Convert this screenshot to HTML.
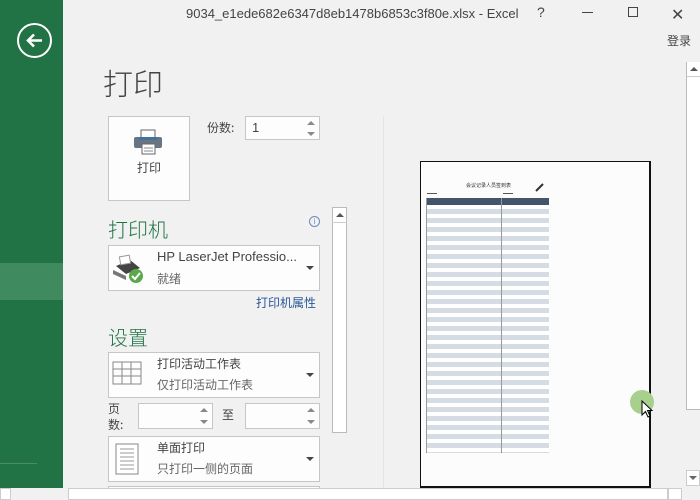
<!DOCTYPE html>
<html><head><meta charset="utf-8"><style>
*{margin:0;padding:0;box-sizing:border-box}
body{width:700px;height:500px;overflow:hidden;background:#f1f1f1;font-family:"Liberation Sans","Noto Sans CJK SC",sans-serif;position:relative;color:#444}
.a{position:absolute}
.box{position:absolute;background:#fdfdfd;border:1px solid #c6c6c6}
.cj{font-family:"Noto Sans CJK SC",sans-serif}
.tri{position:absolute;width:0;height:0;border-left:4px solid transparent;border-right:4px solid transparent;border-top:4px solid #444}
.up{position:absolute;width:0;height:0;border-left:4px solid transparent;border-right:4px solid transparent;border-bottom:4px solid #888}
.dn{position:absolute;width:0;height:0;border-left:4px solid transparent;border-right:4px solid transparent;border-top:4px solid #888}
</style></head><body>
<div class="a" style="left:0;top:0;width:63px;height:488px;background:#217346"></div>
<div class="a" style="left:0;top:263px;width:63px;height:37px;background:#3f8a5f"></div>
<div class="a" style="left:0;top:463px;width:37px;height:1px;background:#4a8c65"></div>
<div class="a" style="left:17px;top:23px;width:35px;height:35px;border:2px solid #fff;border-radius:50%"></div>
<svg class="a" style="left:17px;top:23px" width="35" height="35"><path d="M25 17.5H11M17 11.5L11 17.5L17 23.5" stroke="#fff" stroke-width="2.6" fill="none"/></svg>
<div class="a" style="left:186px;top:6px;font-size:13px;color:#444">9034_e1ede682e6347d8eb1478b6853c3f80e.xlsx - Excel</div>
<div class="a" style="left:537px;top:4px;font-size:14px">?</div>
<div class="a" style="left:582px;top:12px;width:11px;height:1px;background:#444"></div>
<div class="a" style="left:628px;top:7px;width:10px;height:10px;border:1px solid #444"></div>
<div class="a cj" style="left:671px;top:1px;font-size:16px;font-weight:300">✕</div>
<div class="a cj" style="left:667px;top:32px;font-size:12px">登录</div>
<div class="a cj" style="left:103px;top:60px;font-size:30px;color:#444;font-weight:300">打印</div>
<div class="box" style="left:108px;top:116px;width:82px;height:85px"></div>
<svg class="a" style="left:133px;top:128px" width="32" height="28"><rect x="8" y="2" width="14" height="8" fill="#fff" stroke="#666"/><rect x="1" y="9" width="28" height="11" rx="2" fill="#687583"/><rect x="6" y="9" width="18" height="3" fill="#4472a0"/><rect x="9" y="16" width="13" height="10" fill="#fff" stroke="#666"/><line x1="11" y1="20" x2="20" y2="20" stroke="#888"/><line x1="11" y1="23" x2="20" y2="23" stroke="#888"/></svg>
<div class="a cj" style="left:137px;top:159px;font-size:12px">打印</div>
<div class="a cj" style="left:207px;top:119px;font-size:12px">份数:</div>
<div class="box" style="left:245px;top:116px;width:75px;height:24px"></div>
<div class="a" style="left:252px;top:120px;font-size:13px">1</div>
<div class="up" style="left:307px;top:121px"></div><div class="dn" style="left:307px;top:132px"></div>
<div class="a cj" style="left:108px;top:214px;font-size:20px;color:#217346;font-weight:300">打印机</div>
<div class="a" style="left:309px;top:216px;width:11px;height:11px;border:1px solid #6a8cc0;border-radius:50%;font-size:8px;color:#6a8cc0;text-align:center;line-height:9px">i</div>
<div class="box" style="left:108px;top:245px;width:212px;height:46px"></div>
<svg class="a" style="left:110px;top:254px" width="36" height="32"><path d="M6 12L20 6L30 14L16 20Z" fill="#444"/><path d="M3 16L16 22L16 26L3 20Z" fill="#777"/><rect x="10" y="2" width="10" height="8" fill="#fff" stroke="#999" transform="rotate(-10 15 6)"/><circle cx="26" cy="22" r="7" fill="#5ba849"/><path d="M22 22l3 3 5-6" stroke="#fff" stroke-width="2" fill="none"/></svg>
<div class="a" style="left:157px;top:249px;font-size:13px;color:#444">HP LaserJet Professio...</div>
<div class="a cj" style="left:157px;top:270px;font-size:12px;color:#666">就绪</div>
<div class="tri" style="left:306px;top:266px"></div>
<div class="a cj" style="left:256px;top:294px;font-size:12px;color:#2b5797">打印机属性</div>
<div class="a cj" style="left:108px;top:322px;font-size:20px;color:#217346;font-weight:300">设置</div>
<div class="box" style="left:108px;top:352px;width:212px;height:46px"></div>
<svg class="a" style="left:112px;top:360px" width="32" height="30"><g stroke="#888" fill="none"><rect x="1" y="2" width="28" height="22"/><line x1="1" y1="9" x2="29" y2="9"/><line x1="1" y1="16" x2="29" y2="16"/><line x1="10" y1="2" x2="10" y2="24"/><line x1="19" y1="2" x2="19" y2="24"/></g></svg>
<div class="a cj" style="left:157px;top:355px;font-size:12px">打印活动工作表</div>
<div class="a cj" style="left:157px;top:376px;font-size:12px;color:#666">仅打印活动工作表</div>
<div class="tri" style="left:306px;top:373px"></div>
<div class="a cj" style="left:108px;top:401px;font-size:12px;line-height:16px">页<br>数:</div>
<div class="box" style="left:138px;top:403px;width:75px;height:26px"></div>
<div class="up" style="left:200px;top:408px"></div><div class="dn" style="left:200px;top:420px"></div>
<div class="a cj" style="left:222px;top:406px;font-size:12px">至</div>
<div class="box" style="left:245px;top:403px;width:75px;height:26px"></div>
<div class="up" style="left:307px;top:408px"></div><div class="dn" style="left:307px;top:420px"></div>
<div class="box" style="left:108px;top:436px;width:212px;height:46px"></div>
<svg class="a" style="left:114px;top:443px" width="26" height="34"><rect x="2" y="1" width="22" height="30" fill="#fff" stroke="#888"/><g stroke="#999"><line x1="6" y1="6" x2="20" y2="6"/><line x1="6" y1="10" x2="20" y2="10"/><line x1="6" y1="14" x2="20" y2="14"/><line x1="6" y1="18" x2="20" y2="18"/><line x1="6" y1="22" x2="20" y2="22"/><line x1="6" y1="26" x2="20" y2="26"/></g></svg>
<div class="a cj" style="left:157px;top:439px;font-size:12px">单面打印</div>
<div class="a cj" style="left:157px;top:460px;font-size:12px;color:#666">只打印一侧的页面</div>
<div class="tri" style="left:306px;top:457px"></div>
<div class="box" style="left:108px;top:486px;width:212px;height:10px"></div>
<div class="a" style="left:332px;top:207px;width:15px;height:226px;background:#fff;border:1px solid #bbb"></div>
<div class="up" style="left:336px;top:213px;border-bottom-color:#555"></div>
<div class="a" style="left:332px;top:222px;width:15px;height:1px;background:#ccc"></div>
<div class="a" style="left:383px;top:116px;width:1px;height:372px;background:#e4e4e4"></div>
<div class="a" style="left:686px;top:62px;width:14px;height:348px;background:#fff;border-left:1px solid #bbb;border-bottom:1px solid #bbb"></div>
<div class="up" style="left:690px;top:67px;border-bottom-color:#555"></div>
<div class="a" style="left:686px;top:76px;width:14px;height:1px;background:#ccc"></div>
<div class="a" style="left:686px;top:470px;width:14px;height:16px;background:#fff;border:1px solid #ccc"></div>
<div class="dn" style="left:689px;top:476px;border-top-color:#666"></div>
<div class="a" style="left:420px;top:161px;width:231px;height:327px;background:#fcfcfc;border:1px solid #111;border-right-width:2px;border-bottom-width:2px"></div>
<div class="a cj" style="left:466px;top:182px;font-size:5px;color:#333">会议记录人员签到表</div>
<div class="a" style="left:427px;top:193px;width:10px;height:1px;background:#555"></div>
<div class="a" style="left:503px;top:193px;width:10px;height:1px;background:#555"></div>
<svg class="a" style="left:535px;top:182px" width="10" height="10"><path d="M1 9L8 2" stroke="#333" stroke-width="2"/></svg>
<div class="a" style="left:426px;top:198px;width:123px;height:7px;background:#44546a"></div>
<div class="a" style="left:426px;top:205px;width:123px;height:248px;background:repeating-linear-gradient(#fff 0 4px,#d6dce4 4px 9px)"></div>
<div class="a" style="left:426px;top:198px;width:1px;height:255px;background:#999"></div>
<div class="a" style="left:501px;top:198px;width:1px;height:255px;background:#999"></div>
<div class="a" style="left:630px;top:390px;width:24px;height:24px;border-radius:50%;background:#a8d08d"></div>
<svg class="a" style="left:641px;top:400px" width="14" height="20"><path d="M1 1L1 15L4.5 11.5L7 17L9 16L6.5 10.5L11 10.5Z" fill="#fff" stroke="#000"/></svg>
<div class="a" style="left:0;top:488px;width:700px;height:12px;background:#f1f1f1"></div>
<div class="a" style="left:68px;top:488px;width:600px;height:12px;background:#fff;border:1px solid #ccc"></div>
<div class="a" style="left:0;top:488px;width:11px;height:12px;background:#fff;border:1px solid #ccc"></div>
<div class="a" style="left:668px;top:488px;width:14px;height:12px;background:#fff;border:1px solid #ccc"></div>
</body></html>
